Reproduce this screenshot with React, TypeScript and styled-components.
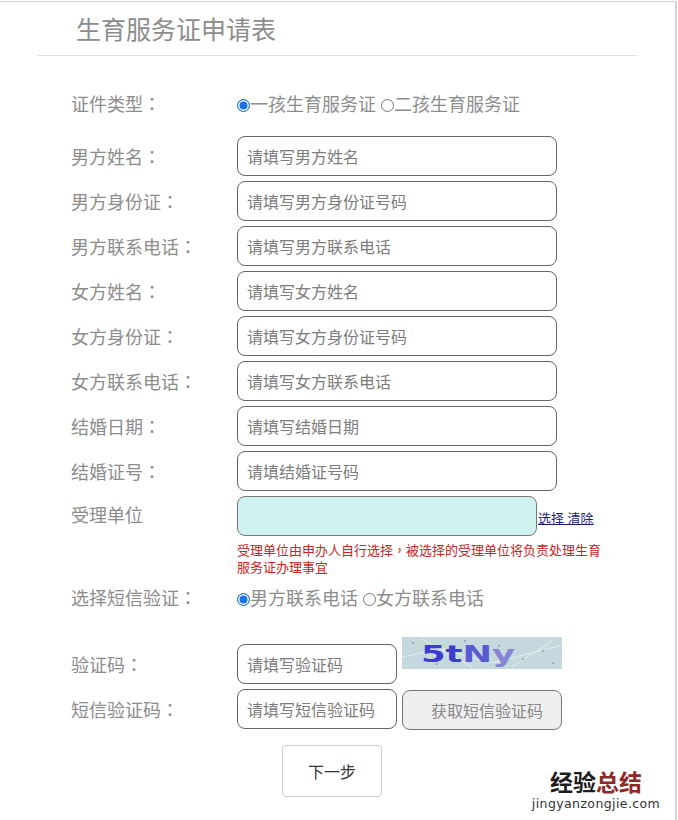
import React from 'react';
import styled, { createGlobalStyle } from 'styled-components';

const Global = createGlobalStyle`
  html, body { margin: 0; padding: 0; background: #fff; }
  body { font-family: "Microsoft YaHei", "Liberation Sans", "Noto Sans CJK SC", sans-serif; }
`;

const Page = styled.div`
  position: relative;
  width: 677px;
  height: 819px;
  box-sizing: border-box;
  border-top: 1px solid #d4d4d4;
  border-right: 2px solid #d4d4d4;
  margin-top: 1px;
  overflow: hidden;
`;

const Head = styled.div`
  margin: 0 0 0 37px;
  width: 600px;
  height: 54px;
  box-sizing: border-box;
  padding: 13px 0 0 39px;
  border-bottom: 1px solid #e0e0e0;
`;

const Title = styled.h1`
  margin: 0;
  font-size: 25px;
  line-height: 30px;
  font-weight: normal;
  color: #8c8c8c;
`;

const Form = styled.form`
  display: flex;
  flex-direction: column;
  padding-left: 71px;
`;

const Row = styled.div<{ $gap?: number; $top?: number }>`
  display: flex;
  align-items: center;
  margin-top: ${(p) => p.$top ?? 0}px;
  margin-bottom: ${(p) => p.$gap ?? 5}px;
`;

const TopRow = styled(Row)`
  align-items: flex-start;
`;

const Label = styled.label`
  width: 166px;
  flex: none;
  padding-top: 4px;
  font-size: 18px;
  line-height: 26px;
  color: #8c8c8c;
`;

const TopLabel = styled(Label)`
  padding-top: 0;
  line-height: 40px;
`;

// Traditional-Chinese cut centres the full-width colon and comma
const Punct = styled.span`
  font-family: "Liberation Sans", "Noto Sans CJK TC", sans-serif;
`;

const RadioLine = styled.div`
  display: flex;
  align-items: center;
  padding-top: 4px;
  font-size: 18px;
  line-height: 26px;
  color: #8c8c8c;
`;

const Option = styled.span`
  margin-right: 5px;
`;

const Dot = styled.span<{ $on?: boolean }>`
  display: inline-block;
  box-sizing: border-box;
  width: 13px;
  height: 13px;
  border-radius: 50%;
  vertical-align: -1px;
  border: 1px solid ${(p) => (p.$on ? '#1a73e8' : '#767676')};
  background: ${(p) => (p.$on ? '#1a73e8' : '#fff')};
  box-shadow: ${(p) => (p.$on ? 'inset 0 0 0 1.5px #fff' : 'none')};
`;

const Field = styled.input<{ $w?: number }>`
  box-sizing: border-box;
  flex: none;
  width: ${(p) => p.$w ?? 320}px;
  height: 40px;
  padding: 4px 9px 0;
  border: 1px solid #666;
  border-radius: 8px;
  font: inherit;
  font-size: 16px;
  color: #666;
  background: #fff;
  outline: none;
  &::placeholder { color: #7c7c7c; opacity: 1; }
`;

const Readonly = styled(Field)`
  background: #cff1ef;
  border-color: #777;
`;

const Links = styled.span`
  font-size: 13px;
  line-height: 18px;
  margin: 14px 0 0 1px;
  color: #1c1c7c;
  text-decoration: underline;
  white-space: pre;
`;

const Hint = styled.p`
  margin: 6px 0 0 166px;
  width: 370px;
  font-size: 13px;
  line-height: 17px;
  color: #cc2424;
`;

const SmsButton = styled.button`
  box-sizing: border-box;
  width: 160px;
  height: 40px;
  margin-left: 5px;
  padding-left: 16px;
  border: 1px solid #777;
  border-radius: 8px;
  background: #efefef;
  font: inherit;
  font-size: 16px;
  color: #888;
  transform: translateY(1px);
`;

const Captcha = styled.svg`
  display: block;
  flex: none;
  width: 160px;
  height: 32px;
  margin: -7px 0 0 5px;
  align-self: flex-start;
`;

const NextWrap = styled.div`
  margin: 11px 0 0 211px;
`;

const NextButton = styled.button`
  width: 100px;
  height: 52px;
  border: 1px solid #ccc;
  border-radius: 4px;
  background: #fff;
  font: inherit;
  font-size: 16px;
  color: #333;
`;

const Mark = styled.div`
  position: absolute;
  left: 526px;
  top: 769px;
  width: 140px;
  text-align: center;
`;

const MarkTitle = styled.div`
  font-size: 23px;
  line-height: 25px;
  font-weight: bold;
  color: #1c1c1c;
`;

const MarkRed = styled.span`
  color: #8c2a2a;
`;

const MarkUrl = styled.div`
  font-family: "DejaVu Sans", sans-serif;
  font-size: 12.5px;
  line-height: 15px;
  color: #333;
  letter-spacing: 0.4px;
  white-space: nowrap;
`;

const rows: [string, string][] = [
  ['男方姓名', '请填写男方姓名'],
  ['男方身份证', '请填写男方身份证号码'],
  ['男方联系电话', '请填写男方联系电话'],
  ['女方姓名', '请填写女方姓名'],
  ['女方身份证', '请填写女方身份证号码'],
  ['女方联系电话', '请填写女方联系电话'],
  ['结婚日期', '请填写结婚日期'],
  ['结婚证号', '请填结婚证号码'],
];

function App() {
  return (
    <Page>
      <Global />
      <Head>
        <Title>生育服务证申请表</Title>
      </Head>
      <Form>
        <Row $top={32} $gap={18}>
          <Label>证件类型<Punct>：</Punct></Label>
          <RadioLine>
            <Option><Dot $on />一孩生育服务证</Option>
            <Option><Dot />二孩生育服务证</Option>
          </RadioLine>
        </Row>
        {rows.map(([label, hint]) => (
          <Row key={label}>
            <Label>{label}<Punct>：</Punct></Label>
            <Field placeholder={hint} />
          </Row>
        ))}
        <TopRow $gap={0}>
          <TopLabel>受理单位</TopLabel>
          <Readonly $w={300} readOnly />
          <Links>选择 清除</Links>
        </TopRow>
        <Hint>
          受理单位由申办人自行选择<Punct>，</Punct>被选择的受理单位将负责处理生育
          <br />
          服务证办理事宜
        </Hint>
        <Row $top={6} $gap={32}>
          <Label>选择短信验证<Punct>：</Punct></Label>
          <RadioLine>
            <Option><Dot $on />男方联系电话</Option>
            <Option><Dot />女方联系电话</Option>
          </RadioLine>
        </Row>
        <Row>
          <Label>验证码<Punct>：</Punct></Label>
          <Field $w={160} placeholder="请填写验证码" />
          <Captcha viewBox="0 0 160 32">
            <rect width="160" height="32" fill="#c5d8de" />
            <path d="M0 20 L40 12 L90 26 L160 8 M20 2 L70 30 M110 30 L150 4" stroke="#e4edf0" strokeWidth="1" fill="none" />
            <path d="M10 6h2M34 27h2M62 4h2M96 9h2M120 22h2M140 14h2M150 26h2" stroke="#6f8a92" strokeWidth="1" />
            <text x="19" y="25" fontFamily="DejaVu Sans" fontWeight="bold" fontSize="23" textLength="94" lengthAdjust="spacingAndGlyphs">
              <tspan fill="#3c3cd4">5t</tspan>
              <tspan fill="#5a5ad2">N</tspan>
              <tspan fill="#8585d2">y</tspan>
            </text>
          </Captcha>
        </Row>
        <Row>
          <Label>短信验证码<Punct>：</Punct></Label>
          <Field $w={160} placeholder="请填写短信验证码" />
          <SmsButton type="button">获取短信验证码</SmsButton>
        </Row>
        <NextWrap>
          <NextButton type="button">下一步</NextButton>
        </NextWrap>
      </Form>
      <Mark>
        <MarkTitle>经验<MarkRed>总结</MarkRed></MarkTitle>
        <MarkUrl>jingyanzongjie.com</MarkUrl>
      </Mark>
    </Page>
  );
}

export default App;
